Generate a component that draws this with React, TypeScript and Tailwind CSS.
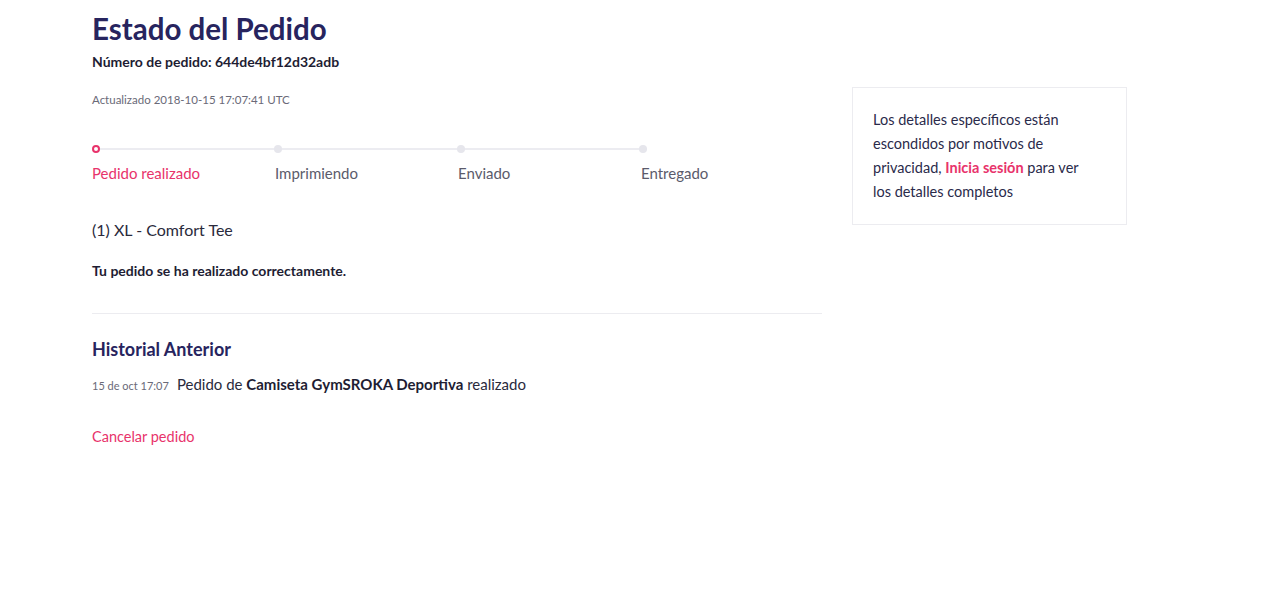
const steps = ['Pedido realizado', 'Imprimiendo', 'Enviado', 'Entregado']

function Stepper() {
  return (
    <div className="mt-[37px] w-[732px]">
      <div className="relative h-[8px] w-[555px]">
        <div className="absolute left-[4px] right-0 top-[3px] h-[2px] bg-[#ececf1]" />
        <div className="relative flex justify-between">
          {steps.map((s, i) =>
            i === 0 ? (
              <span key={s} className="h-[8px] w-[8px] rounded-full border-2 border-[#e8336b] bg-white" />
            ) : (
              <span key={s} className="h-[8px] w-[8px] rounded-full bg-[#e6e6ec]" />
            )
          )}
        </div>
      </div>
      <div className="mt-[10px] flex">
        {steps.map((s, i) => (
          <div
            key={s}
            className={`w-[183px] shrink-0 text-[15px] leading-5 ${i === 0 ? 'text-[#e8336b]' : 'text-[#5b5b6b]'}`}
          >
            {s}
          </div>
        ))}
      </div>
    </div>
  )
}

export default function App() {
  return (
    <div className="min-h-screen bg-white font-['Lato','Noto_Sans',sans-serif] text-[#25243a]">
      <div className="flex gap-[30px] pl-[92px] pt-[11px]">
        {/* Main column */}
        <div className="w-[730px]">
          <h1 className="text-[29.5px] font-bold leading-9 text-[#27245e]">Estado del Pedido</h1>
          <p className="mt-[5px] text-[14px] font-bold leading-5 text-[#1e1d33]">
            Número de pedido: 644de4bf12d32adb
          </p>
          <p className="mt-[20px] text-[11.5px] leading-4 text-[#6a6a78]">Actualizado 2018-10-15 17:07:41 UTC</p>

          <Stepper />

          <p className="mt-[35px] text-[16px] leading-6 text-[#2a2a3c]">(1) XL - Comfort Tee</p>
          <p className="mt-[19px] text-[14px] font-bold leading-5 text-[#1e1d33]">
            Tu pedido se ha realizado correctamente.
          </p>

          <div className="mt-[32px] h-px w-full bg-[#ececf0]" />

          <h2 className="mt-[23px] text-[18px] font-bold leading-6 text-[#27245e]">Historial Anterior</h2>
          <div className="mt-[12px] flex items-baseline gap-[8px]">
            <span className="text-[11px] text-[#6a6a78]">15 de oct 17:07</span>
            <span className="text-[15px] text-[#2a2a3c]">
              Pedido de <b className="font-bold text-[#1e1d33]">Camiseta GymSROKA Deportiva</b> realizado
            </span>
          </div>

          <p className="mt-[31px] text-[14.5px] leading-5 text-[#e8336b]">Cancelar pedido</p>
        </div>

        {/* Privacy card */}
        <div className="mt-[76px] h-[138px] w-[275px] border border-[#ececf0] px-[20px] pt-[20px]">
          <p className="w-[212px] text-[14.5px] leading-6 text-[#2a2a4a]">
            Los detalles específicos están escondidos por motivos de privacidad,{' '}
            <span className="font-bold text-[#e8336b]">Inicia sesión</span> para ver los detalles completos
          </p>
        </div>
      </div>
    </div>
  )
}
